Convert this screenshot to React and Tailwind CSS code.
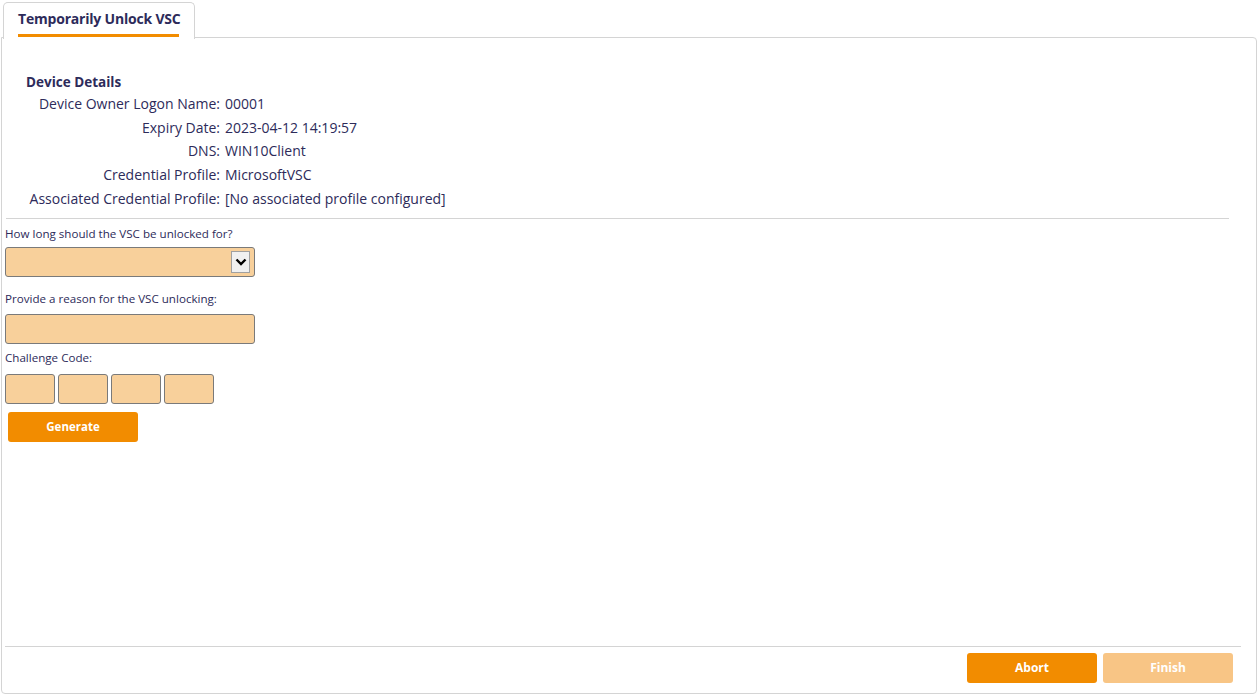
const details = [
  ["Device Owner Logon Name:", "00001"],
  ["Expiry Date:", "2023-04-12 14:19:57"],
  ["DNS:", "WIN10Client"],
  ["Credential Profile:", "MicrosoftVSC"],
  ["Associated Credential Profile:", "[No associated profile configured]"],
];

export default function App() {
  return (
    <div
      className="w-[1258px] h-[695px] bg-white text-[#2d2b5a] relative overflow-hidden"
      style={{ fontFamily: "'Open Sans', 'Liberation Sans', sans-serif" }}
    >
      {/* Tab */}
      <div className="absolute left-[3px] top-[2px] w-[192px] h-[37px] border border-b-0 border-[#d4d4d4] rounded-t-[5px] bg-white z-10">
        <div className="ml-[14px] mt-[6px] w-[161px] text-center text-[14px] font-bold leading-[19px] tracking-[-0.2px] whitespace-nowrap">
          Temporarily Unlock VSC
        </div>
        <div className="ml-[14px] mt-[6px] w-[161px] h-[3px] bg-[#f28c00]" />
      </div>

      {/* Panel */}
      <div className="absolute left-[1px] top-[37px] w-[1256px] h-[657px] border border-[#d4d4d4] rounded-b-[4px] rounded-tr-[4px] flex flex-col">
        <div className="pl-[24px] pt-[35px] text-[13.5px] font-bold leading-[18px]">
          Device Details
        </div>
        <div className="mt-[1px] flex flex-col text-[14px] leading-[23.7px]">
          {details.map(([k, v]) => (
            <div key={k} className="flex whitespace-nowrap">
              <div className="w-[218px] text-right">{k}</div>
              <div className="pl-[5px]">{v}</div>
            </div>
          ))}
        </div>
        <div className="ml-[4px] mt-[7px] w-[1223px] h-px bg-[#d4d4d4]" />

        <div className="pl-[3px] text-[11.6px] leading-[14px]">
          <div className="mt-[8px]">How long should the VSC be unlocked for?</div>
          <div className="mt-[6px] w-[250px] h-[30px] bg-[#f8d09b] border border-[#7a7a7a] rounded-[3px] flex items-center justify-end pr-[4px]">
            <div className="w-[19px] h-[22px] bg-[#f0f0f0] border border-[#a0a0a0] flex items-center justify-center">
              <svg width="12" height="8" viewBox="0 0 12 8">
                <path d="M1.5 1.5 L6 6 L10.5 1.5" fill="none" stroke="#000" strokeWidth="2.4" />
              </svg>
            </div>
          </div>
          <div className="mt-[15px]">Provide a reason for the VSC unlocking:</div>
          <div className="mt-[8px] w-[250px] h-[30px] bg-[#f8d09b] border border-[#7a7a7a] rounded-[3px]" />
          <div className="mt-[7px]">Challenge Code:</div>
          <div className="mt-[9px] flex gap-[3px]">
            {[0, 1, 2, 3].map((i) => (
              <div
                key={i}
                className="w-[50px] h-[30px] bg-[#f8d09b] border border-[#7a7a7a] rounded-[3px]"
              />
            ))}
          </div>
          <button className="ml-[3px] mt-[8px] w-[130px] h-[30px] bg-[#f28c00] rounded-[3px] text-white font-bold text-[11.5px]">
            Generate
          </button>
        </div>

        <div className="flex-1" />
        <div className="ml-[3px] w-[1236px] h-px bg-[#d4d4d4]" />
        <div className="flex justify-end gap-[6px] pr-[23px] pt-[6px] pb-[10px]">
          <button className="w-[130px] h-[30px] bg-[#f28c00] rounded-[3px] text-white font-bold text-[12px]">
            Abort
          </button>
          <button className="w-[130px] h-[30px] bg-[#f8c585] rounded-[3px] text-white font-bold text-[12px]">
            Finish
          </button>
        </div>
      </div>
    </div>
  );
}
